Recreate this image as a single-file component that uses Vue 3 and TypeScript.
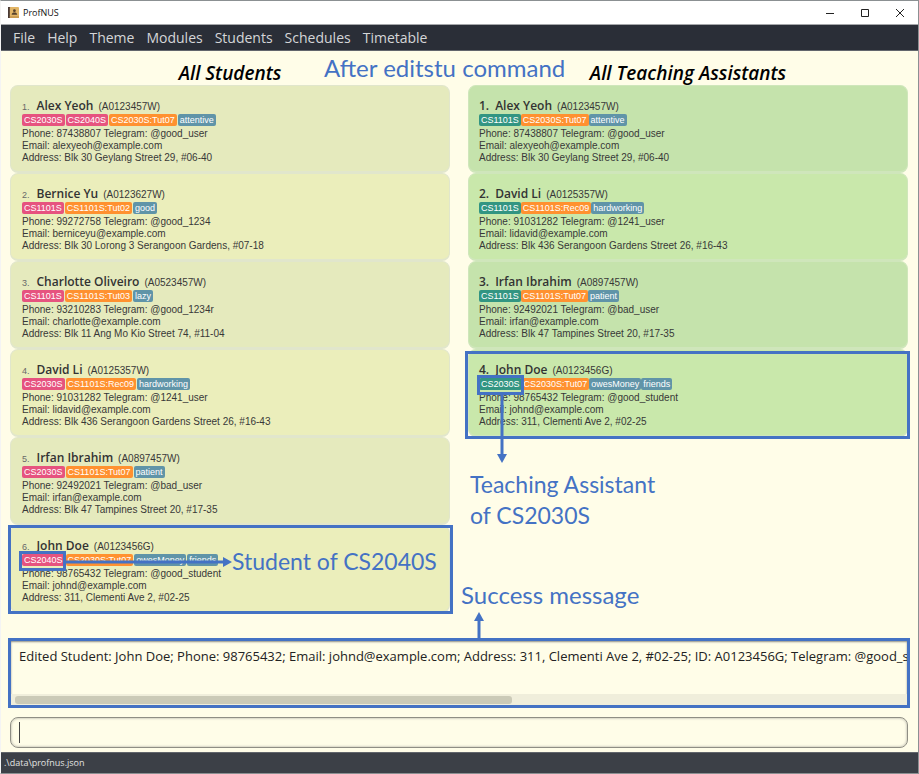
<script setup lang="ts">
import { ref } from 'vue'

type TagKind = 'student' | 'assistant' | 'tutorial' | 'remark'

interface Tag {
  label: string
  kind: TagKind
}

interface Person {
  name: string
  id: string
  phone: string
  telegram: string
  email: string
  address: string
  tags: Tag[]
  callout?: 'right' | 'down'
}

const menus: string[] = ['File', 'Help', 'Theme', 'Modules', 'Students', 'Schedules', 'Timetable']

const tag = (kind: TagKind, label: string): Tag => ({ kind, label })

const alex = { name: 'Alex Yeoh', id: 'A0123457W', phone: '87438807', telegram: '@good_user', email: 'alexyeoh@example.com', address: 'Blk 30 Geylang Street 29, #06-40' }
const bernice = { name: 'Bernice Yu', id: 'A0123627W', phone: '99272758', telegram: '@good_1234', email: 'berniceyu@example.com', address: 'Blk 30 Lorong 3 Serangoon Gardens, #07-18' }
const charlotte = { name: 'Charlotte Oliveiro', id: 'A0523457W', phone: '93210283', telegram: '@good_1234r', email: 'charlotte@example.com', address: 'Blk 11 Ang Mo Kio Street 74, #11-04' }
const david = { name: 'David Li', id: 'A0125357W', phone: '91031282', telegram: '@1241_user', email: 'lidavid@example.com', address: 'Blk 436 Serangoon Gardens Street 26, #16-43' }
const irfan = { name: 'Irfan Ibrahim', id: 'A0897457W', phone: '92492021', telegram: '@bad_user', email: 'irfan@example.com', address: 'Blk 47 Tampines Street 20, #17-35' }
const john = { name: 'John Doe', id: 'A0123456G', phone: '98765432', telegram: '@good_student', email: 'johnd@example.com', address: '311, Clementi Ave 2, #02-25' }

const students: Person[] = [
  { ...alex, tags: [tag('student', 'CS2030S'), tag('student', 'CS2040S'), tag('tutorial', 'CS2030S:Tut07'), tag('remark', 'attentive')] },
  { ...bernice, tags: [tag('student', 'CS1101S'), tag('tutorial', 'CS1101S:Tut02'), tag('remark', 'good')] },
  { ...charlotte, tags: [tag('student', 'CS1101S'), tag('tutorial', 'CS1101S:Tut03'), tag('remark', 'lazy')] },
  { ...david, tags: [tag('student', 'CS2030S'), tag('tutorial', 'CS1101S:Rec09'), tag('remark', 'hardworking')] },
  { ...irfan, tags: [tag('student', 'CS2030S'), tag('tutorial', 'CS1101S:Tut07'), tag('remark', 'patient')] },
  { ...john, callout: 'right', tags: [tag('student', 'CS2040S'), tag('tutorial', 'CS2030S:Tut07'), tag('remark', 'owesMoney'), tag('remark', 'friends')] },
]

const assistants: Person[] = [
  { ...alex, tags: [tag('assistant', 'CS1101S'), tag('tutorial', 'CS2030S:Tut07'), tag('remark', 'attentive')] },
  { ...david, tags: [tag('assistant', 'CS1101S'), tag('tutorial', 'CS1101S:Rec09'), tag('remark', 'hardworking')] },
  { ...irfan, tags: [tag('assistant', 'CS1101S'), tag('tutorial', 'CS1101S:Tut07'), tag('remark', 'patient')] },
  { ...john, callout: 'down', tags: [tag('assistant', 'CS2030S'), tag('tutorial', 'CS2030S:Tut07'), tag('remark', 'owesMoney'), tag('remark', 'friends')] },
]

const panels = [
  { key: 'students', title: 'All Students', people: students },
  { key: 'assistants', title: 'All Teaching Assistants', people: assistants },
]

const command = ref('')
</script>

<template>
  <div class="window">
    <header class="titlebar">
      <svg class="app-icon" viewBox="0 0 12 12" aria-hidden="true">
        <rect x="0" y="0" width="3" height="12" fill="#4a3a35" />
        <rect x="2" y="0" width="10" height="12" rx="1" fill="#e2b566" />
        <rect x="2" y="10" width="10" height="2" fill="#c99a50" />
        <circle cx="7" cy="4" r="1.5" fill="#54402c" />
        <path d="M4 8.500c0-2 1.500-2.500 3-2.500s3 .5 3 2.500z" fill="#54402c" />
      </svg>
      <span class="app-name">ProfNUS</span>
      <div class="window-controls">
        <button type="button" aria-label="Minimize">
          <svg viewBox="0 0 10 10"><path d="M1 5.500h8" /></svg>
        </button>
        <button type="button" aria-label="Maximize">
          <svg viewBox="0 0 10 10"><path d="M1.500 1.500h7v7h-7z" /></svg>
        </button>
        <button type="button" aria-label="Close">
          <svg viewBox="0 0 10 10"><path d="M1 1l8 8M9 1l-8 8" /></svg>
        </button>
      </div>
    </header>

    <nav class="menubar">
      <button v-for="menu in menus" :key="menu" type="button">{{ menu }}</button>
    </nav>

    <main class="content">
      <p class="note large caption">After editstu command</p>

      <div class="panels">
        <section v-for="panel in panels" :key="panel.key" class="panel" :class="panel.key">
          <h2>{{ panel.title }}</h2>
          <ol>
            <li v-for="(person, index) in panel.people" :key="person.id" class="card">
              <div class="heading">
                <span class="index">{{ index + 1 }}.</span>
                <span class="name">{{ person.name }}</span>
                <span>({{ person.id }})</span>
              </div>
              <div class="tags">
                <span v-for="item in person.tags" :key="item.label" class="tag" :class="item.kind">{{ item.label }}</span>
              </div>
              <div>Phone: {{ person.phone }} Telegram: {{ person.telegram }}</div>
              <div>Email: {{ person.email }}</div>
              <div>Address: {{ person.address }}</div>

              <template v-if="person.callout">
                <span class="frame"></span>
                <span class="tag-frame"></span>
              </template>
              <div v-if="person.callout === 'right'" class="callout callout-right">
                <svg class="arrow-right" viewBox="0 0 166 10" aria-hidden="true">
                  <path d="M0 3.500h158v3H0z" /><path d="M157 0l9 5-9 5z" />
                </svg>
                <span class="note">Student of CS2040S</span>
              </div>
              <div v-if="person.callout === 'down'" class="callout callout-down">
                <svg class="arrow-down" viewBox="0 0 10 69" aria-hidden="true">
                  <path d="M3.500 0h3v61h-3z" /><path d="M0 60h10l-5 9z" />
                </svg>
                <span class="note">Teaching Assistant<br />of CS2030S</span>
              </div>
            </li>
          </ol>
        </section>
      </div>

      <section class="result">
        <div class="result-note">
          <span class="note large">Success message</span>
          <svg class="arrow-up" viewBox="0 0 10 26" aria-hidden="true">
            <path d="M3.500 8h3v18h-3z" /><path d="M0 9h10L5 0z" />
          </svg>
        </div>
        <output class="message">Edited Student: John Doe; Phone: 98765432; Email: johnd@example.com; Address: 311, Clementi Ave 2, #02-25; ID: A0123456G; Telegram: @good_student</output>
        <div class="track"><div class="thumb"></div></div>
      </section>

      <div class="command">
        <input v-model="command" type="text" aria-label="Command" />
        <span class="caret"></span>
      </div>
    </main>

    <footer class="statusbar">.\data\profnus.json</footer>
  </div>
</template>

<style>
body {
  margin: 0;
}
</style>

<style scoped>
* {
  box-sizing: border-box;
}

.window {
  display: flex;
  flex-direction: column;
  min-height: 100vh;
  border: 1px solid #8b9092;
  border-left-color: #f4f4f4;
  background: #fffde8;
  font-family: 'Open Sans', 'Noto Sans', sans-serif;
  color: #383838;
  overflow: hidden;
}

button {
  padding: 0;
  border: 0;
  background: none;
  font: inherit;
  color: inherit;
}

.titlebar {
  display: flex;
  align-items: center;
  height: 23px;
  padding-left: 7px;
  background: #fff;
}

.app-icon {
  width: 11px;
  height: 11px;
}

.app-name {
  margin-left: 4px;
  font-size: 9px;
  color: #111;
}

.window-controls {
  display: flex;
  margin-left: auto;
  padding-right: 1px;
}

.window-controls button {
  display: flex;
  align-items: center;
  justify-content: center;
  width: 35px;
  height: 20px;
}

.window-controls svg {
  width: 10px;
  height: 10px;
  fill: none;
  stroke: #222;
}

.menubar {
  display: flex;
  align-items: center;
  gap: 12px;
  height: 27px;
  padding: 0 12px;
  border-top: 1px solid #a5a7aa;
  border-bottom: 1px solid #62666c;
  background: #2a2e37;
  font-size: 14px;
  line-height: 24px;
  color: #d5d6d8;
}

.content {
  position: relative;
  display: flex;
  flex: 1;
  flex-direction: column;
  padding: 10px 10px 4px 9px;
}

.note {
  margin: 0;
  font-family: Lato, sans-serif;
  font-size: 23px;
  line-height: 31px;
  white-space: nowrap;
  color: #4472c4;
}

.note.large {
  font-size: 24px;
}

.caption {
  position: absolute;
  top: 1px;
  left: 323px;
}

.panels {
  display: grid;
  grid-template-columns: 1fr 1fr;
  gap: 18px;
}

h2 {
  margin: 0;
  font-size: 19px;
  font-style: italic;
  font-weight: 600;
  line-height: 24px;
  text-align: center;
  color: #000;
}

ol {
  margin: 0;
  padding: 0;
  list-style: none;
}

.card {
  position: relative;
  height: 88px;
  padding: 12px 11px;
  border: 1px solid #e1e6cc;
  border-bottom-width: 2px;
  border-radius: 8px;
  background: #e5eabd;
  font-family: 'Liberation Sans', Arial, sans-serif;
  font-size: 10px;
  line-height: 12px;
}

.card:nth-child(even) {
  background: #ebeebb;
}

.assistants .card {
  padding-left: 10px;
  border-color: #cfe6bb;
  background: #c5e3ac;
}

.assistants .card:nth-child(even) {
  background: #c9e8ab;
}

.heading {
  display: flex;
  align-items: baseline;
  gap: 5px;
  height: 16px;
  line-height: 16px;
}

.index {
  margin-right: 2px;
  font-size: 9px;
  color: #686868;
}

.name,
.assistants .index {
  font-family: 'Open Sans', sans-serif;
  font-size: 12px;
  font-weight: 600;
  color: #333;
}

.assistants .index {
  margin-right: 1px;
}

.tags {
  display: flex;
  gap: 1px;
  height: 12px;
  margin-bottom: 2px;
}

.assistants .tags {
  gap: 0;
}

.tag {
  padding: 0 2px;
  border-radius: 2px;
  font-size: 9px;
  color: #fff;
}

.tag.student {
  background: #e6537f;
}

.tag.assistant {
  background: #329582;
}

.tag.tutorial {
  background: #ff9130;
}

.tag.remark {
  background: #6094a8;
}

.frame,
.tag-frame {
  position: absolute;
  border: 3px solid #4472c4;
}

.frame {
  inset: -1px -4px -3px -3px;
}

.assistants .frame {
  inset: 1px -3px -4px -4px;
}

.tag-frame {
  top: 25px;
  left: 8px;
  width: 47px;
  height: 20px;
}

.callout {
  position: absolute;
}

.callout svg,
.result-note svg {
  display: block;
  fill: #4472c4;
}

.callout-right {
  top: 20px;
  left: 55px;
  display: flex;
  align-items: center;
}

.arrow-right {
  width: 166px;
  height: 10px;
}

.callout-down {
  top: 44px;
  left: 1px;
}

.arrow-down {
  width: 10px;
  height: 69px;
  margin: 0 0 6px 27px;
}

.callout-down .note {
  display: block;
}

.result {
  position: relative;
  display: flex;
  flex-direction: column;
  height: 70px;
  margin: auto -2px 9px;
  border: 3px solid #4472c4;
  box-shadow: inset 0 1px 2px #8d8d88;
}

.result-note {
  position: absolute;
  bottom: 100%;
  left: 450px;
}

.arrow-up {
  width: 10px;
  height: 26px;
  margin: 2px 0 3px 13px;
}

.message {
  flex: 1;
  padding: 6px 0 0 8px;
  overflow: hidden;
  font-size: 13px;
  line-height: 18px;
  white-space: nowrap;
  color: #222;
}

.track {
  height: 11px;
  padding: 2px 4px;
  background: #f0eedb;
}

.thumb {
  width: 56%;
  height: 8px;
  border-radius: 3px;
  background: #cbcab7;
}

.command {
  position: relative;
  display: flex;
}

.command input {
  width: 100%;
  height: 31px;
  padding: 0 9px;
  border: 1px solid #8f8e84;
  border-radius: 8px;
  outline: 0;
  background: #fffde8;
  box-shadow: inset 0 0 2px 1px #d5d3c4;
  font: inherit;
  font-size: 13px;
}

.caret {
  position: absolute;
  top: 5px;
  left: 9px;
  width: 1px;
  height: 21px;
  background: #444;
}

.statusbar {
  height: 21px;
  padding-left: 3px;
  border-top: 1px solid #62666c;
  background: #3c4047;
  font-size: 9px;
  line-height: 19px;
  color: #e2e2e2;
}
</style>
